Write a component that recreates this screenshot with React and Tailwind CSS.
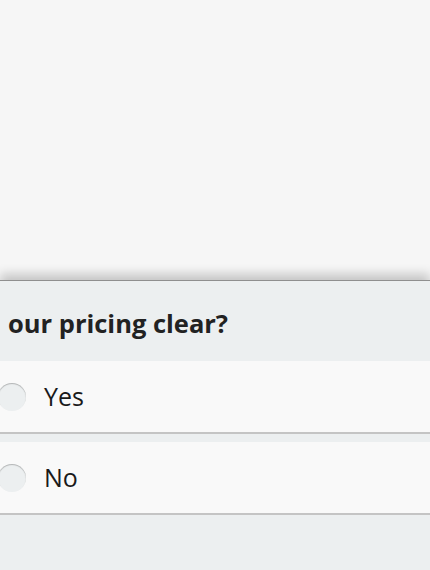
export default function App() {
  const options = ['Yes', 'No'];

  return (
    <div
      className="flex h-[570px] w-[430px] flex-col overflow-hidden bg-[#f6f6f6]"
      style={{ fontFamily: '"Open Sans", "Noto Sans", sans-serif' }}
    >
      <div className="h-[280px] shrink-0 bg-[#f6f6f6]" />

      <div className="relative flex-1 border-t border-[#8f8f8f] bg-[#eceff0] shadow-[0_-6px_10px_rgba(0,0,0,0.2)]">
        <div className="flex h-[80px] items-center pl-[8px] pt-[6px]">
          <h2 className="text-[25.5px] font-bold leading-none text-[#222]">our pricing clear?</h2>
        </div>

        <div className="flex flex-col gap-[8px]">
          {options.map((label) => (
            <label
              key={label}
              className="flex h-[73px] items-center border-b-2 border-[#c4c4c4] bg-[#f9f9f9]"
            >
              <span className="ml-[-2px] h-[28px] w-[28px] shrink-0 rounded-full bg-[#eceff0] shadow-[inset_0_1px_1px_rgba(0,0,0,0.25)]" />
              <span className="ml-[18px] text-[25px] leading-none text-[#1a1a1a]">{label}</span>
            </label>
          ))}
        </div>
      </div>
    </div>
  );
}
